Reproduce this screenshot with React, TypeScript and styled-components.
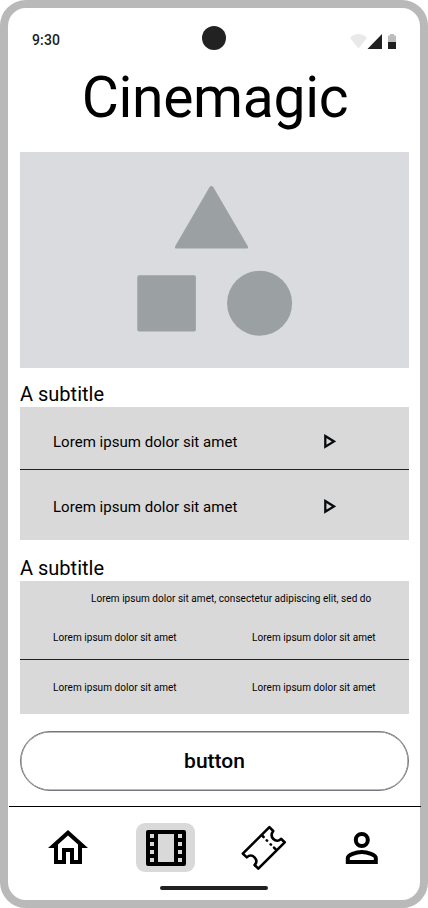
import React from "react";
import styled, { createGlobalStyle } from "styled-components";

const GlobalStyle = createGlobalStyle`
  * { box-sizing: border-box; }
  body { margin: 0; background: #fff; font-family: Roboto, sans-serif; color: #000; }
  svg { display: block; flex: none; }
`;

const Phone = styled.div`
  width: 428px;
  height: 908px;
  border: 8px solid #b9b9b9;
  border-radius: 26px;
  background: #fff;
  display: flex;
  flex-direction: column;
`;

const StatusBar = styled.header`
  height: 60px;
  flex: none;
  display: grid;
  grid-template-columns: 1fr 24px 1fr;
  align-items: center;
  padding: 0 24px;
`;

const Clock = styled.time`
  font-size: 14px;
  line-height: 20px;
  font-weight: 500;
  letter-spacing: 0.14px;
  color: #202020;
  padding-top: 4px;
`;

const Camera = styled.div`
  width: 24px;
  height: 24px;
  border-radius: 50%;
  background: #222;
`;

const StatusIcons = styled.div`
  justify-self: end;
  padding-top: 7px;
`;

const Title = styled.h1`
  margin: -2px 0 0 2px;
  height: 86px;
  flex: none;
  font-size: 57px;
  line-height: 64px;
  font-weight: 400;
  letter-spacing: -0.3px;
  text-align: center;
`;

const Content = styled.main`
  display: flex;
  flex-direction: column;
  padding: 0 11px 0 12px;
`;

const Hero = styled.div`
  height: 216px;
  background: #dadbdf;
`;

const Subtitle = styled.h2<{ $gap: number }>`
  margin: ${(p) => p.$gap}px 0 0;
  height: 26px;
  font-size: 20px;
  line-height: 26px;
  font-weight: 400;
  letter-spacing: 0;
`;

const Panel = styled.section`
  background: #d9d9d9;
  height: 133px;
`;

const TrackRow = styled.div<{ $divided?: boolean }>`
  height: ${(p) => (p.$divided ? 63 : 70)}px;
  border-bottom: ${(p) => (p.$divided ? "1px solid #202020" : "0")};
  padding: ${(p) => (p.$divided ? 23 : 25)}px 73px 0 33px;
  display: flex;
  justify-content: space-between;
  align-items: flex-start;
  font-size: 15px;
  line-height: 24px;
  letter-spacing: 0.03px;
`;

const PlayIcon = styled.svg`
  margin-top: 4px;
`;

const Caption = styled.p`
  margin: 0;
  height: 36px;
  padding: 10px 0 0 71px;
  font-size: 10px;
  line-height: 16px;
  letter-spacing: 0.035px;
  white-space: nowrap;
`;

const PairRow = styled.div<{ $divided?: boolean }>`
  height: ${(p) => (p.$divided ? 43 : 54)}px;
  border-bottom: ${(p) => (p.$divided ? "1px solid #202020" : "0")};
  padding: ${(p) => (p.$divided ? 13 : 20)}px 0 0 33px;
  display: grid;
  grid-template-columns: 199px 1fr;
  font-size: 10px;
  line-height: 16px;
  letter-spacing: 0.05px;
`;

const PillButton = styled.button`
  margin-top: 17px;
  height: 60px;
  border: 1px solid #79747e;
  box-shadow: inset 0 0 0 0.5px #79747e;
  border-radius: 30px;
  background: #fff;
  color: #000;
  font: 500 21px/24px Roboto, sans-serif;
  padding: 0;
`;

const Nav = styled.nav`
  margin: 15px -1px 0 1px;
  border-top: 1px solid #000;
  height: 66px;
  flex: none;
  display: grid;
  grid-template-columns: 97.5px 98.5px 97.5px 59px;
  padding: 16px 0 0 29.5px;
`;

const NavItem = styled.a<{ $active?: boolean }>`
  width: 59px;
  height: 49px;
  border-radius: 9px;
  background: ${(p) => (p.$active ? "#d9d9d9" : "transparent")};
  display: flex;
  align-items: center;
  justify-content: center;
`;

const HomeBar = styled.div`
  width: 108px;
  height: 4px;
  border-radius: 2px;
  margin: 14px auto 0;
  background: #202020;
`;

const Play = () => (
  <PlayIcon width="13" height="15" viewBox="0 0 13 15">
    <path d="M2.3 2.1L11 7.4L2.3 12.7Z" fill="none" stroke="#080c0e" strokeWidth="2.3" />
  </PlayIcon>
);

export default function App() {
  return (
    <>
      <GlobalStyle />
      <Phone>
        <StatusBar>
          <Clock>9:30</Clock>
          <Camera />
          <StatusIcons>
            <svg width="46" height="15" viewBox="0 0 46 15">
              <path d="M0 3.8C5-1.2 12-1.2 17 3.8L8.5 14.5Z" fill="#e9e9e9" />
              <path d="M17.5 15L32 0V15Z" fill="#202020" />
              <path d="M38 8V1.5H40V0H44V1.5H46V8Z" fill="#bcbcbe" />
              <path d="M38 8H46V15H38Z" fill="#202020" />
            </svg>
          </StatusIcons>
        </StatusBar>
        <Title>Cinemagic</Title>
        <Content>
          <Hero>
            <svg width="389" height="216" viewBox="20 152 389 216" fill="#9ba0a3">
              <path d="M209.6 187.1Q211.4 184.7 213.2 187.1L247.7 246Q248.7 248.6 246.5 248.6H176.5Q174.3 248.6 175.3 246Z" />
              <rect x="137.3" y="275.2" width="58.6" height="56.4" rx="1.8" />
              <circle cx="259.6" cy="303.3" r="32.5" />
            </svg>
          </Hero>
          <Subtitle $gap={13}>A subtitle</Subtitle>
          <Panel>
            <TrackRow $divided>
              <span>Lorem ipsum dolor sit amet</span>
              <Play />
            </TrackRow>
            <TrackRow>
              <span>Lorem ipsum dolor sit amet</span>
              <Play />
            </TrackRow>
          </Panel>
          <Subtitle $gap={15}>A subtitle</Subtitle>
          <Panel>
            <Caption>Lorem ipsum dolor sit amet, consectetur adipiscing elit, sed do</Caption>
            <PairRow $divided>
              <span>Lorem ipsum dolor sit amet</span>
              <span>Lorem ipsum dolor sit amet</span>
            </PairRow>
            <PairRow>
              <span>Lorem ipsum dolor sit amet</span>
              <span>Lorem ipsum dolor sit amet</span>
            </PairRow>
          </Panel>
          <PillButton>button</PillButton>
        </Content>
        <Nav>
          <NavItem>
            <svg width="48" height="48" viewBox="0 0 24 24">
              <path d="M12 5.69l5 4.5V18h-2v-6H9v6H7v-7.81l5-4.5M12 3L2 12h3v8h6v-6h2v6h6v-8h3L12 3z" />
            </svg>
          </NavItem>
          <NavItem $active>
            <svg width="40" height="36" viewBox="0 0 40 36">
              <path
                fillRule="evenodd"
                d="M2 0H38Q40 0 40 2V34Q40 36 38 36H2Q0 36 0 34V2Q0 0 2 0ZM12 4V32H28V4ZM4 4V8H8V4ZM4 12V16H8V12ZM4 20V24H8V20ZM4 28V32H8V28ZM32 4V8H36V4ZM32 12V16H36V12ZM32 20V24H36V20ZM32 28V32H36V28Z"
              />
            </svg>
          </NavItem>
          <NavItem>
            <svg width="46" height="46" viewBox="241 825 46 46" fill="none" stroke="#000" strokeWidth="2.6" strokeLinejoin="round" strokeLinecap="round">
              <path d="M269.4 827.2L273.2 831C271 834 271.4 837 273.4 839C275.6 841.2 278.4 841.4 281 838.8L284.7 842.3L258.3 868.7L254.6 865C257 862.4 256.6 859.4 254.5 857.3C252.4 855.2 249.4 855 246.8 857.4L242.8 853.6Z" />
              <path d="M262 835.4L263.6 837M266.7 840.3L267.1 840.7M270.6 844.3L271 844.7M274 847.6L275.8 849.4" />
            </svg>
          </NavItem>
          <NavItem>
            <svg width="48" height="48" viewBox="0 0 24 24" fill="none" stroke="#000" strokeWidth="2">
              <circle cx="11.9" cy="8" r="3" />
              <path d="M4.9 19V17C4.9 15.5 9 14 11.9 14S18.9 15.5 18.9 17V19Z" />
            </svg>
          </NavItem>
        </Nav>
        <HomeBar />
      </Phone>
    </>
  );
}
